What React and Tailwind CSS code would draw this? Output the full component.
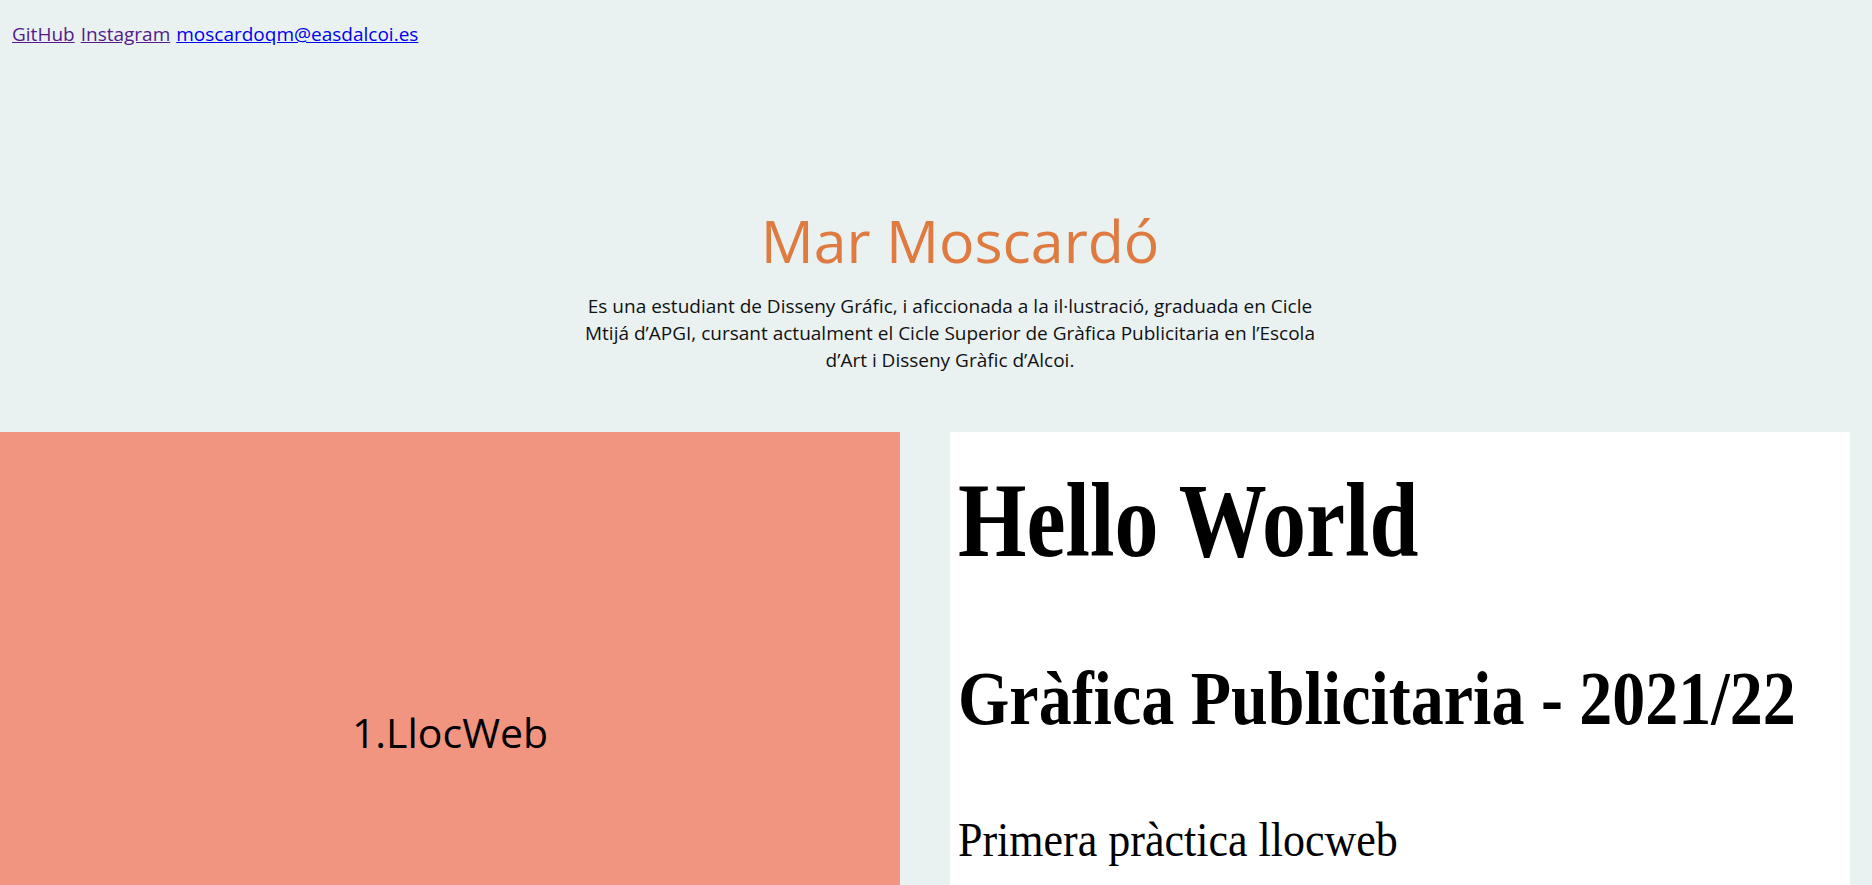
export default function App() {
  return (
    <div className="min-h-screen w-full bg-[#e9f2f1] font-['Open_Sans',sans-serif]">
      {/* Links */}
      <nav className="px-[12px] pt-[21px] text-[19px] leading-[26px] flex gap-[6px]">
        <a href="#" className="text-[#551a8b] underline">GitHub</a>
        <a href="#" className="text-[#551a8b] underline">Instagram</a>
        <a href="#" className="text-[#0000ee] underline">moscardoqm@easdalcoi.es</a>
      </nav>

      {/* Header */}
      <header className="flex flex-col items-center pl-[28px] pt-[164px]">
        <h1 className="pl-[20px] text-[59px] leading-none font-normal text-[#df7a40]">
          Mar Moscardó
        </h1>
        <p className="mt-[23px] text-center text-[19px] leading-[27px] text-[#111] whitespace-nowrap">
          Es una estudiant de Disseny Gráfic, i aficcionada a la il·lustració, graduada en Cicle
          <br />
          Mtijá d’APGI, cursant actualment el Cicle Superior de Gràfica Publicitaria en l’Escola
          <br />
          d’Art i Disseny Gràfic d’Alcoi.
        </p>
      </header>

      {/* Projects */}
      <section className="mt-[58px] flex gap-[50px] pr-[22px]">
        <div className="w-[900px] h-[600px] bg-[#f19580] flex items-center justify-center">
          <span className="text-[41px] leading-none text-black">1.LlocWeb</span>
        </div>
        <div className="w-[900px] h-[600px] bg-white pl-[8px] font-['Liberation_Serif',serif] text-black">
          <div className="mt-[51px] text-[88px] leading-none font-bold">
            <span className="inline-block scale-y-[1.2] origin-[50%_84%]">Hello World</span>
          </div>
          <div className="mt-[98px] text-[66px] leading-none font-bold">
            <span className="inline-block scale-y-[1.15] origin-[50%_84%]">Gràfica Publicitaria - 2021/22</span>
          </div>
          <div className="mt-[85px] text-[44px] leading-none">
            <span className="inline-block scale-y-[1.12] origin-[50%_84%]">Primera pràctica llocweb</span>
          </div>
        </div>
      </section>
    </div>
  );
}
